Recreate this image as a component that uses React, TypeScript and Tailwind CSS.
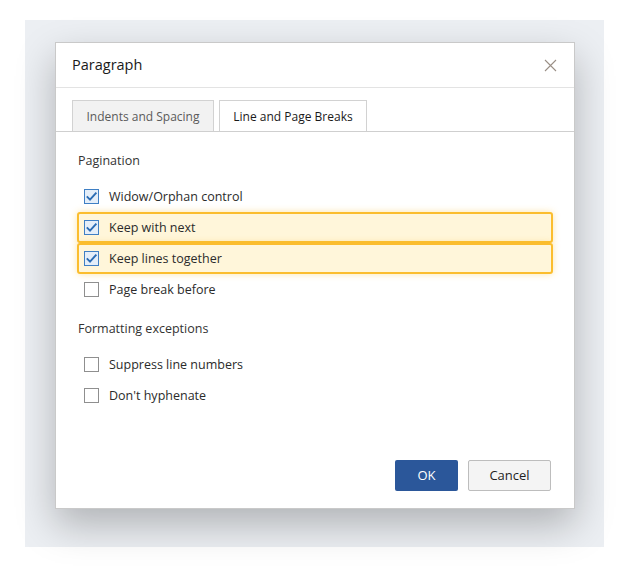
import { useState } from 'react';

type Option = { label: string; checked: boolean; highlight?: boolean };

function CheckBox({ checked }: { checked: boolean }) {
  if (!checked) {
    return <span className="block w-[15px] h-[15px] border border-[#8f8f8f] bg-white" />;
  }
  return (
    <span className="flex items-center justify-center w-[15px] h-[15px] border border-[#3f7fc4] bg-[#e4eef9]">
      <svg width="13" height="13" viewBox="0 0 13 13" fill="none">
        <path d="M1.8 6.4 L5 9.6 L11.4 2.6" stroke="#2a6cb4" strokeWidth="1.9" />
      </svg>
    </span>
  );
}

function OptionRow({ label, checked, highlight }: Option) {
  const frame = highlight
    ? 'border-2 border-[#fbbd2e] bg-[#fff6da] rounded-[3px] shadow-[0_0_7px_rgba(251,189,46,0.4)] pl-[5px]'
    : 'pl-[7px]';
  return (
    <div className={`flex items-center gap-[10px] h-[31px] ${frame}`}>
      <CheckBox checked={checked} />
      <span className="text-[12.5px] text-[#2b2b2b] pt-[1px]">{label}</span>
    </div>
  );
}

export default function App() {
  const [tab, setTab] = useState(1);

  const pagination: Option[] = [
    { label: 'Widow/Orphan control', checked: true },
    { label: 'Keep with next', checked: true, highlight: true },
    { label: 'Keep lines together', checked: true, highlight: true },
    { label: 'Page break before', checked: false },
  ];
  const exceptions: Option[] = [
    { label: 'Suppress line numbers', checked: false },
    { label: "Don't hyphenate", checked: false },
  ];

  const tabs = ['Indents and Spacing', 'Line and Page Breaks'];

  return (
    <div
      className="w-[629px] h-[567px] bg-white pt-[20px] pl-[25px]"
      style={{ fontFamily: '"Segoe UI", "Open Sans", "Noto Sans", sans-serif' }}
    >
      <div className="w-[579px] h-[527px] bg-[#eceff3] pt-[22px] pl-[30px]">
        <div className="w-[520px] h-[467px] bg-white border border-[#c9c9c9] shadow-[0_16px_36px_rgba(0,0,0,0.25)] flex flex-col">
          {/* header */}
          <div className="h-[45px] flex items-center justify-between pl-[16px] pr-[17px] border-b border-[#e3e3e3]">
            <span className="text-[14.5px] font-medium text-[#1a1a1a]">Paragraph</span>
            <svg width="13" height="13" viewBox="0 0 13 13" fill="none">
              <path d="M1 1 L12 12 M12 1 L1 12" stroke="#9a8f86" strokeWidth="1.1" />
            </svg>
          </div>

          {/* tabs */}
          <div className="flex items-end gap-[5px] pl-[16px] pt-[12px] border-b border-[#cfcfcf]">
            {tabs.map((t, i) => (
              <button
                key={t}
                onClick={() => setTab(i)}
                className={`h-[31px] pt-[2px] border border-b-0 border-[#d2d2d2] text-[12px] ${
                  i === tab
                    ? 'bg-white text-[#1a1a1a] font-medium w-[148px]'
                    : 'bg-[#f2f2f2] text-[#5a5a5a] w-[142px]'
                }`}
              >
                {t}
              </button>
            ))}
          </div>

          {/* options */}
          <div className="px-[21px] pt-[19px]">
            <div className="text-[12.5px] font-medium text-[#333] h-[20px] leading-[20px] pl-[1px]">Pagination</div>
            <div className="mt-[10px]">
              {pagination.map((o) => (
                <OptionRow key={o.label} {...o} />
              ))}
            </div>
            <div className="text-[12.5px] font-medium text-[#333] h-[20px] leading-[20px] pl-[1px] mt-[14px]">
              Formatting exceptions
            </div>
            <div className="mt-[10px]">
              {exceptions.map((o) => (
                <OptionRow key={o.label} {...o} />
              ))}
            </div>
          </div>

          <div className="flex-1" />

          {/* footer */}
          <div className="flex justify-end gap-[10px] pr-[23px] pb-[17px]">
            <button className="w-[63px] h-[31px] rounded-[2px] bg-[#2b579a] text-white text-[13px]">OK</button>
            <button className="w-[83px] h-[31px] rounded-[2px] bg-[#f4f4f4] border border-[#bdbdbd] text-[#1f1f1f] text-[13px]">
              Cancel
            </button>
          </div>
        </div>
      </div>
    </div>
  );
}
